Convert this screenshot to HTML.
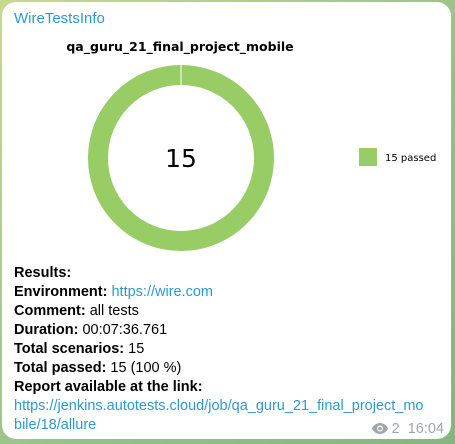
<!DOCTYPE html>
<html><head><style>
body{margin:0;width:455px;height:444px;overflow:hidden;background:linear-gradient(135deg,#c9d88f,#94c08a 60%,#86b582);font-family:"Liberation Sans","DejaVu Sans",sans-serif}
.card{position:absolute;left:2px;top:2px;width:449px;height:437px;background:#fff;border-radius:14px}
.t{position:absolute;left:14px;top:10px;color:#2c9ad1;font-size:15px}
.txt{position:absolute;left:14px;top:264px;font-size:14.5px;line-height:19px;color:#000}
b{font-weight:bold}
a{color:#2c9ad1;text-decoration:none}
.meta{position:absolute;right:11px;bottom:7px;color:#a0a6ab;font-size:14.5px}
</style></head><body>
<div class="card"></div>
<div class="t">WireTestsInfo</div>
<svg style="position:absolute;left:0;top:0" width="455" height="260">
<text x="180" y="51" text-anchor="middle" font-family="DejaVu Sans" font-weight="bold" font-size="12.5">qa_guru_21_final_project_mobile</text>
<circle cx="181" cy="158" r="83" fill="none" stroke="#98cc65" stroke-width="20"/>
<line x1="181" y1="64" x2="181" y2="85" stroke="#fff" stroke-width="1"/>
<text x="181" y="167" text-anchor="middle" font-family="DejaVu Sans" font-size="25">15</text>
<rect x="359" y="148" width="18" height="18" fill="#98cc65"/>
<text x="385" y="161" font-family="DejaVu Sans" font-size="10">15 passed</text>
</svg>
<div class="txt">
<b>Results:</b><br>
<b>Environment:</b> <a>https://wire.com</a><br>
<b>Comment:</b> all tests<br>
<b>Duration:</b> 00:07:36.761<br>
<b>Total scenarios:</b> 15<br>
<b>Total passed:</b> 15 (100 %)<br>
<b>Report available at the link:</b><br>
<a>https://jenkins.autotests.cloud/job/qa_guru_21_final_project_mo<br>bile/18/allure</a>
</div>
<div class="meta"><svg width="16" height="11" viewBox="0 0 16 11" style="vertical-align:-1px"><path d="M8 0C4 0 1 3 0 5.5 1 8 4 11 8 11s7-3 8-5.5C15 3 12 0 8 0z" fill="#a0a6ab"/><circle cx="8" cy="5.5" r="3" fill="#fff"/><circle cx="8" cy="5.5" r="1.8" fill="#a0a6ab"/></svg> 2&nbsp; 16:04</div>
</body></html>
